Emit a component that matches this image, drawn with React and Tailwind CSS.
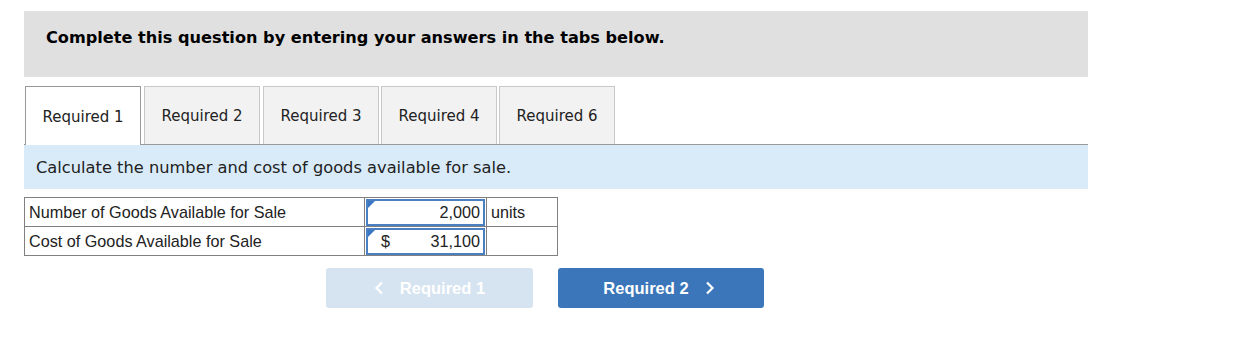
export default function App() {
  const tabs = [
    ["Required 1", ""],
    ["Required 2", "ml-[3px]"],
    ["Required 3", "ml-[3px]"],
    ["Required 4", "ml-[2px]"],
    ["Required 6", "ml-[2px]"],
  ];
  return (
    <div className="w-[1235px] h-[355px] bg-white relative" style={{ fontFamily: '"DejaVu Sans", Verdana, sans-serif' }}>
      <div className="pt-[11px] pl-[24px] w-[1088px]">
        <div className="h-[66px] bg-[#e0e0e0] pl-[22px] pt-[16px]">
          <div className="text-[16.15px] font-bold text-black leading-[22px]">Complete this question by entering your answers in the tabs below.</div>
        </div>
        <div className="mt-[9px] flex items-end pl-[1px] border-b border-[#999]">
          {tabs.map(([t, m], i) => (
            <div
              key={t}
              className={
                i === 0
                  ? "w-[116px] h-[59px] pt-[2px] bg-white border border-[#999] border-b-0 -mb-px flex items-center justify-center text-[15px] text-[#222]"
                  : `${m} w-[116px] h-[58px] pt-[2px] bg-[#f2f2f2] border border-[#c8c8c8] border-b-0 flex items-center justify-center text-[15px] text-[#222]`
              }
            >
              {t}
            </div>
          ))}
        </div>
        <div className="h-[44px] bg-[#d9ebf9] pl-[12px] pt-[2px] flex items-center text-[16.25px] text-[#222]">
          Calculate the number and cost of goods available for sale.
        </div>
        <div className="mt-[8px]" style={{ fontFamily: '"Liberation Sans", Arial, sans-serif' }}>
          <table className="border-collapse text-[16.2px] text-[#222]">
            <tbody>
              <tr className="h-[29px]">
                <td className="w-[340px] border border-[#808080] pl-[4px] py-0 leading-[18px]">Number of Goods Available for Sale</td>
                <td className="w-[122px] border border-[#808080] p-0">
                  <div className="relative h-[27px] mx-px border-2 border-[#4a7fc1] flex items-center justify-end pr-[3px] bg-white">
                    <span className="absolute left-0 top-0 w-0 h-0 border-t-[7px] border-t-[#3a76c4] border-r-[7px] border-r-transparent"></span>
                    2,000
                  </div>
                </td>
                <td className="w-[71px] border border-[#808080] pl-[4px] py-0 leading-[18px]">units</td>
              </tr>
              <tr className="h-[29px]">
                <td className="border border-[#808080] pl-[4px] py-0 leading-[18px]">Cost of Goods Available for Sale</td>
                <td className="border border-[#808080] p-0">
                  <div className="relative h-[27px] mx-px border-2 border-[#4a7fc1] flex items-center justify-between pl-[13px] pr-[3px] bg-white">
                    <span className="absolute left-0 top-0 w-0 h-0 border-t-[7px] border-t-[#3a76c4] border-r-[7px] border-r-transparent"></span>
                    <span>$</span>
                    <span>31,100</span>
                  </div>
                </td>
                <td className="border border-[#808080] py-0"></td>
              </tr>
            </tbody>
          </table>
        </div>
        <div className="mt-[12px] flex gap-[25px] pl-[302px]" style={{ fontFamily: '"Liberation Sans", Arial, sans-serif' }}>
          <div className="w-[207px] h-[40px] rounded-[3px] bg-[#d6e3f1] flex items-center justify-center gap-[16px] text-white font-bold text-[16.5px]">
            <svg width="10" height="14" viewBox="0 0 10 14"><path d="M8 1.5 L2.5 7 L8 12.5" stroke="white" strokeWidth="2.2" fill="none" /></svg>
            <span>Required 1</span>
          </div>
          <div className="w-[206px] h-[40px] rounded-[3px] bg-[#3a76b9] flex items-center justify-center gap-[16px] pr-[4px] text-white font-bold text-[16.5px]">
            <span>Required 2</span>
            <svg width="10" height="14" viewBox="0 0 10 14"><path d="M2 1.5 L7.5 7 L2 12.5" stroke="white" strokeWidth="2.2" fill="none" /></svg>
          </div>
        </div>
      </div>
    </div>
  );
}
